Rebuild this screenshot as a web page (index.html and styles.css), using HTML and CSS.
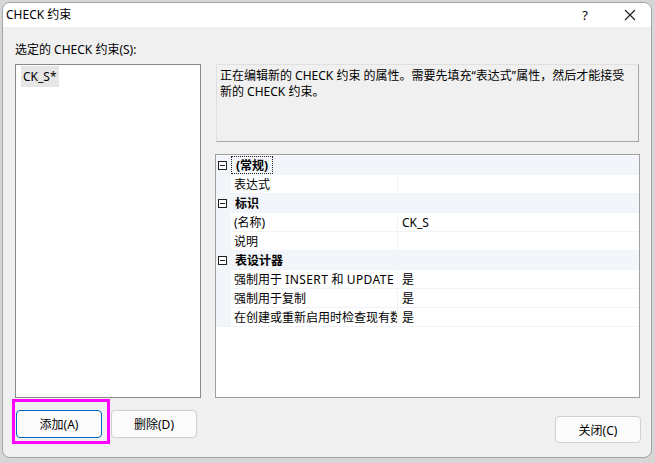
FILE: index.html
```html
<!DOCTYPE html>
<html lang="zh-CN">
<head>
<meta charset="utf-8">
<title>CHECK 约束</title>
<link rel="stylesheet" href="styles.css">
</head>
<body>
<div class="window">
  <div class="titlebar">
    <span class="title">CHECK 约束</span>
    <span class="tb-help">?</span>
    <span class="tb-close">
      <svg width="12" height="12" viewBox="0 0 12 12"><path d="M1 1 L11 11 M11 1 L1 11" stroke="#1a1a1a" stroke-width="1.1" fill="none"/></svg>
    </span>
  </div>
  <div class="content">
    <div class="label">选定的 CHECK 约束(S):</div>
    <div class="main">
      <div class="listbox">
        <div class="list-item">CK_S*</div>
      </div>
      <div class="right">
        <div class="desc">正在编辑新的 CHECK 约束 的属性。需要先填充“表达式”属性，然后才能接受新的 CHECK 约束。</div>
        <div class="pgrid">
          <div class="row cat">
            <span class="margin"><svg width="9" height="9" viewBox="0 0 9 9"><rect x="0.5" y="0.5" width="8" height="8" fill="#fff" stroke="#222"/><path d="M2 4.5 H7" stroke="#222"/></svg></span>
            <span class="cat-name focus">(常规)</span>
          </div>
          <div class="row"><span class="margin"></span><span class="name">表达式</span><span class="value"></span></div>
          <div class="row cat">
            <span class="margin"><svg width="9" height="9" viewBox="0 0 9 9"><rect x="0.5" y="0.5" width="8" height="8" fill="#fff" stroke="#222"/><path d="M2 4.5 H7" stroke="#222"/></svg></span>
            <span class="cat-name">标识</span>
          </div>
          <div class="row"><span class="margin"></span><span class="name">(名称)</span><span class="value">CK_S</span></div>
          <div class="row"><span class="margin"></span><span class="name">说明</span><span class="value"></span></div>
          <div class="row cat">
            <span class="margin"><svg width="9" height="9" viewBox="0 0 9 9"><rect x="0.5" y="0.5" width="8" height="8" fill="#fff" stroke="#222"/><path d="M2 4.5 H7" stroke="#222"/></svg></span>
            <span class="cat-name">表设计器</span>
          </div>
          <div class="row"><span class="margin"></span><span class="name">强制用于 <span class="lat">INSERT</span> 和 <span class="lat">UPDATE</span></span><span class="value">是</span></div>
          <div class="row"><span class="margin"></span><span class="name">强制用于复制</span><span class="value">是</span></div>
          <div class="row"><span class="margin"></span><span class="name">在创建或重新启用时检查现有数据</span><span class="value">是</span></div>
        </div>
      </div>
    </div>
    <div class="footer">
      <button class="btn btn-default highlighted">添加(A)</button>
      <button class="btn btn-delete">删除(D)</button>
      <button class="btn btn-close">关闭(C)</button>
    </div>
  </div>
</div>
</body>
</html>
```
FILE: styles.css
```css
* { box-sizing: border-box; }
html, body { margin: 0; padding: 0; }
body {
  width: 655px;
  height: 463px;
  background: #d6d6d6;
  font-family: "Noto Sans", "Noto Sans CJK SC", sans-serif;
  font-size: 12px;
  color: #000;
  padding: 2px 0 0 2px;
  overflow: hidden;
}
.window {
  width: 650px;
  height: 456px;
  border: 1px solid #a4a4a4;
  border-radius: 8px;
  background: #f0f0f0;
  overflow: hidden;
  display: flex;
  flex-direction: column;
}
.titlebar {
  height: 24px;
  background: #fff;
  display: flex;
  align-items: center;
  padding-left: 3px;
  flex: none;
}
.title { flex: 1; font-size: 12px; line-height: 16px; }
.tb-help { width: 12px; text-align: center; margin-right: 33px; font-size: 13px; }
.tb-close { width: 12px; height: 12px; display: flex; margin-right: 15px; }
.content {
  flex: 1;
  padding: 15px 10px 0 12px;
  display: flex;
  flex-direction: column;
}
.label { line-height: 16px; height: 16px; margin-bottom: 6px; }
.main {
  display: flex;
  gap: 14px;
  height: 334px;
}
.listbox {
  width: 186px;
  border: 1px solid #8a8a8a;
  background: #fff;
  padding: 1px 5px;
}
.list-item {
  display: inline-block;
  background: #e6e6e6;
  line-height: 21px;
  height: 21px;
  padding: 0 2px;
}
.right {
  width: 425px;
  display: flex;
  flex-direction: column;
}
.desc {
  margin: 0 1px;
  height: 78px;
  border-top: 1px solid #e0e0e0;
  border-left: 1px solid #e0e0e0;
  border-right: 1px solid #a6a6a6;
  border-bottom: 1px solid #a6a6a6;
  padding: 3px 3px 2px;
  line-height: 16px;
}
.pgrid {
  margin-top: 12px;
  height: 244px;
  border: 1px solid #a0a0a0;
  background: #fff;
  padding-top: 1px;
}
.row {
  display: flex;
  height: 19px;
  border-bottom: 1px solid #f0f3f8;
  line-height: 20px;
}
.row.cat { background: #f2f5fa; font-weight: bold; }
.margin {
  width: 15px;
  flex: none;
  background: #f2f5fa;
  display: flex;
  align-items: center;
  justify-content: center;
  padding-right: 2px;
}
.cat-name { padding: 0 4px; }
.focus { border: 1px dotted #222; line-height: 18px; }
.name {
  width: 167px;
  flex: none;
  padding-left: 3px;
  white-space: nowrap;
  overflow: hidden;
  text-overflow: clip;
  border-right: 1px solid #f0f3f8;
}
.lat { letter-spacing: 0.45px; }
.value { flex: 1; padding-left: 4px; }
.footer {
  display: flex;
  align-items: flex-start;
  padding-top: 12px;
}
.btn {
  font-family: "Noto Sans", "Noto Sans CJK SC", sans-serif;
  font-size: 12px;
  width: 86px;
  height: 28px;
  border: 1px solid #d0d0d0;
  border-radius: 4px;
  background: #fbfbfb;
  color: #000;
  padding: 0;
}
.btn-default {
  margin-left: 1px;
  border-color: #0067c0;
  position: relative;
}
.highlighted::after {
  content: "";
  position: absolute;
  top: -12px;
  left: -5px;
  right: -9px;
  bottom: -7px;
  border: 3px solid #ff00ff;
}
.btn-delete { margin-left: 9px; }
.btn-close { margin-left: auto; margin-top: 6px; height: 27px; width: 86px; }
```
